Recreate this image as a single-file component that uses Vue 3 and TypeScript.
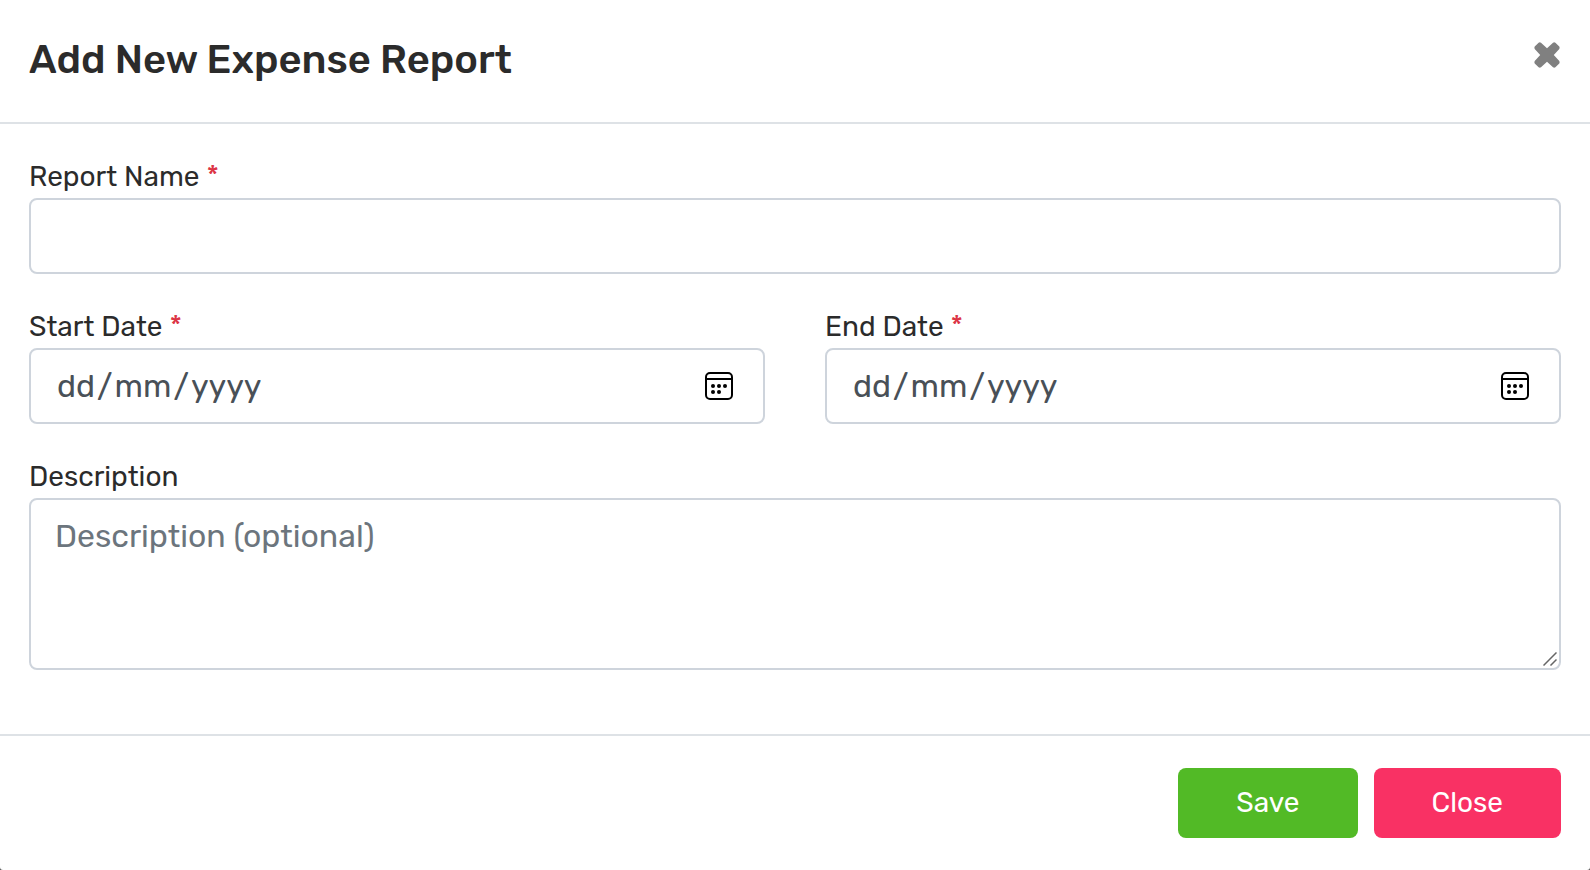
<script setup lang="ts">
import { reactive, ref } from 'vue'

type DateKey = 'startDate' | 'endDate'

const report = reactive({ name: '', startDate: '', endDate: '', description: '' })

const dateFields: { key: DateKey; label: string }[] = [
  { key: 'startDate', label: 'Start Date' },
  { key: 'endDate', label: 'End Date' },
]

const dots = [
  { x: 8, y: 14 },
  { x: 14, y: 14 },
  { x: 20, y: 14 },
  { x: 8, y: 20 },
  { x: 14, y: 20 },
]

const open = ref(true)

// Splits an ISO date into day, month and year parts, with hints when empty.
function segments(value: string): string[] {
  const [year, month, day] = value ? value.split('-') : ['yyyy', 'mm', 'dd']
  return [day, '/', month, '/', year]
}

function close(): void {
  open.value = false
}
</script>

<template>
  <form v-if="open" class="modal" @submit.prevent="close">
    <header class="modal-header">
      <h1 class="title">Add New Expense Report</h1>
      <button class="dismiss" type="button" aria-label="Dismiss" @click="close">
        <svg viewBox="0 0 26 26" width="26" height="26" aria-hidden="true">
          <path
            d="M4.6 .7Q5.8 0 7 .7L13 6.2 19 .7Q20.2 0 21.4 .7L25.3 4.6Q26 5.8 25.3 7L19.8 13 25.3 19Q26 20.2 25.3 21.4L21.4 25.3Q20.2 26 19 25.3L13 19.8 7 25.3Q5.8 26 4.6 25.3L.7 21.4Q0 20.2 .7 19L6.2 13 .7 7Q0 5.8 .7 4.6Z"
            fill="#808080"
          />
        </svg>
      </button>
    </header>

    <div class="modal-body">
      <div class="field">
        <label for="name">Report Name <span class="required">*</span></label>
        <input id="name" v-model="report.name" class="control" type="text" />
      </div>

      <div class="row">
        <div v-for="f in dateFields" :key="f.key" class="field">
          <label :for="f.key">{{ f.label }} <span class="required">*</span></label>
          <div class="date">
            <input :id="f.key" v-model="report[f.key]" class="control" type="date" />
            <div class="date-face" aria-hidden="true">
              <span class="segments">
                <span v-for="(s, i) in segments(report[f.key])" :key="i">{{ s }}</span>
              </span>
              <svg viewBox="0 0 28 28" width="28" height="28">
                <rect x="1" y="1" width="26" height="26" rx="4" fill="none" stroke="#000" stroke-width="2" />
                <path d="M1 7H27" stroke="#000" stroke-width="2" />
                <circle v-for="d in dots" :key="`${d.x}-${d.y}`" :cx="d.x" :cy="d.y" r="2" />
              </svg>
            </div>
          </div>
        </div>
      </div>

      <div class="field">
        <label for="description">Description</label>
        <div class="area">
          <textarea
            id="description"
            v-model="report.description"
            class="control"
            placeholder="Description (optional)"
          ></textarea>
          <svg class="grip" viewBox="0 0 14 14" width="14" height="14" aria-hidden="true">
            <path d="M.5 13.5 13.5 .5M7.5 13.5 13.5 7.5" stroke="#666" stroke-width="1.5" />
          </svg>
        </div>
      </div>
    </div>

    <footer class="modal-footer">
      <button class="btn save" type="submit">Save</button>
      <button class="btn close" type="button" @click="close">Close</button>
    </footer>
  </form>
</template>

<style>
body {
  background: #555;
}
</style>

<style scoped>
.modal,
.modal * {
  box-sizing: border-box;
}

.modal {
  display: flex;
  flex-direction: column;
  min-height: 100vh;
  background: #fff;
  border-radius: 0 0 3px 3px;
  color: #2b2b2b;
  font-family: Rubik, Roboto, sans-serif;
  font-size: 28px;
  line-height: 42px;
}

.modal-header {
  display: flex;
  align-items: flex-start;
  justify-content: space-between;
  padding: 30px 29px 32px;
  border-bottom: 2px solid #dee2e6;
}

.title {
  margin: 0;
  font-size: 40px;
  line-height: 60px;
  font-weight: 500;
}

.dismiss {
  display: flex;
  margin: 12px 1px 0 0;
  padding: 0;
  border: 0;
  background: none;
  cursor: pointer;
}

.modal-body {
  display: flex;
  flex: 1;
  flex-direction: column;
  gap: 32px;
  padding: 32px 29px 64px;
}

.row {
  display: grid;
  grid-template-columns: 1fr 1fr;
  gap: 60px;
}

.field {
  display: flex;
  flex-direction: column;
  min-width: 0;
}

.required {
  color: #dc3545;
}

.control {
  display: block;
  width: 100%;
  height: 76px;
  padding: 12px 24px;
  border: 2px solid #ced4dc;
  border-radius: 8px;
  background: #fff;
  color: #495057;
  font: inherit;
  font-size: 32px;
  line-height: 48px;
}

.date,
.area {
  position: relative;
}

.date .control::-webkit-datetime-edit,
.date .control::-webkit-calendar-picker-indicator {
  opacity: 0;
}

.date-face {
  position: absolute;
  inset: 0;
  display: flex;
  align-items: center;
  justify-content: space-between;
  padding: 0 32px 0 28px;
  color: #495057;
  font-size: 32px;
  line-height: 48px;
  pointer-events: none;
}

.segments {
  display: flex;
  gap: 2px;
}

textarea.control {
  height: 172px;
  resize: none;
}

textarea::placeholder {
  color: #6c757d;
  opacity: 1;
}

.grip {
  position: absolute;
  right: 4px;
  bottom: 4px;
}

.modal-footer {
  display: flex;
  justify-content: flex-end;
  gap: 16px;
  padding: 32px 29px;
  border-top: 2px solid #dee2e6;
}

.btn {
  padding: 14px 58px;
  border: 0;
  border-radius: 8px;
  color: #fff;
  font: inherit;
  cursor: pointer;
}

.save {
  background: #52ba26;
}

.close {
  background: #f93164;
}
</style>
